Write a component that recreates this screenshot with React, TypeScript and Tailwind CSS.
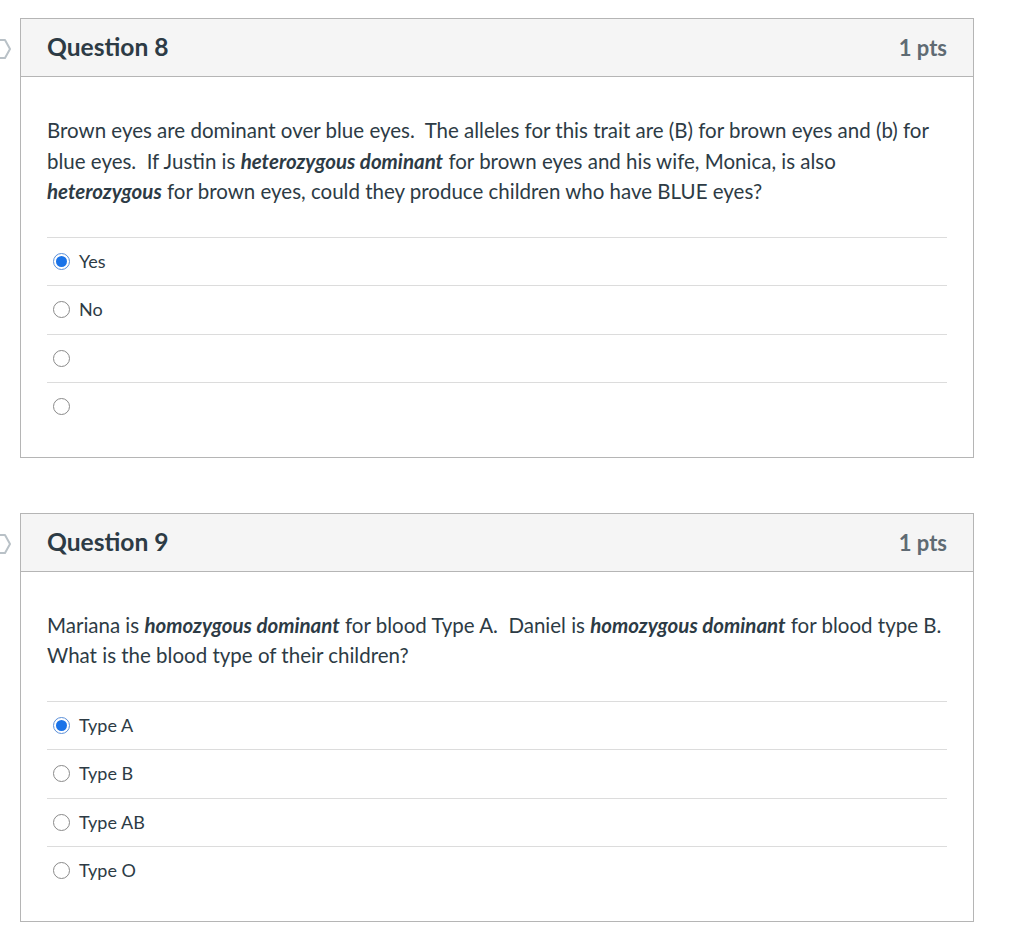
import React from "react";

type Answer = { label: string; checked?: boolean };

const Flag = () => (
  <svg
    className="absolute left-[-30px] top-[18px]"
    width="22"
    height="24"
    viewBox="0 0 22 24"
    fill="none"
  >
    <path
      d="M2 3h12l5 9-5 9H2"
      stroke="#b9c1c7"
      strokeWidth="2"
      strokeLinejoin="round"
    />
  </svg>
);

const Radio = ({ checked }: { checked?: boolean }) =>
  checked ? (
    <span className="flex size-[17px] items-center justify-center rounded-full border border-[#5b8fd8] bg-white">
      <span className="size-[11px] rounded-full bg-[#1a73e8]" />
    </span>
  ) : (
    <span className="size-[17px] rounded-full border border-[#8a8a8a] bg-white" />
  );

const Question = ({
  num,
  children,
  answers,
}: {
  num: number;
  children: React.ReactNode;
  answers: Answer[];
}) => (
  <div className="relative border border-[#b5b5b5] bg-white">
    <Flag />
    <div className="flex h-[58px] items-center justify-between border-b border-[#b5b5b5] bg-[#f5f5f5] px-[26px]">
      <h2 className="text-[24.6px] font-bold text-[#2d3b45]">Question {num}</h2>
      <span className="text-[22px] font-bold text-[#5f6b73]">1 pts</span>
    </div>
    <div className="px-[26px] pb-[26px] pt-[38px]">
      <p className="mb-[30px] text-[20.5px] leading-[30.5px] text-[#2d3b45]">{children}</p>
      <div>
        {answers.map((a, i) => (
          <div
            key={i}
            className="flex h-[48.5px] items-center gap-[9px] border-t border-[#dcdcdc] pl-[6px]"
          >
            <Radio checked={a.checked} />
            <span className="text-[18px] text-[#2d3b45]">{a.label}</span>
          </div>
        ))}
      </div>
    </div>
  </div>
);

export default function App() {
  return (
    <div
      className="min-h-[940px] bg-white pl-[20px] pr-[50px] pt-[18px]"
      style={{ fontFamily: "Lato, 'Liberation Sans', sans-serif" }}
    >
      <div className="flex flex-col gap-[55px]">
        <Question
          num={8}
          answers={[{ label: "Yes", checked: true }, { label: "No" }, { label: "" }, { label: "" }]}
        >
          Brown eyes are dominant over blue eyes.&nbsp; The alleles for this trait are (B) for brown
          eyes and (b) for blue eyes.&nbsp; If Justin is{" "}
          <strong>
            <em>heterozygous dominant</em>
          </strong>{" "}
          for brown eyes and his wife, Monica, is also{" "}
          <strong>
            <em>heterozygous</em>
          </strong>{" "}
          for brown eyes, could they produce children who have BLUE eyes?
        </Question>
        <Question
          num={9}
          answers={[
            { label: "Type A", checked: true },
            { label: "Type B" },
            { label: "Type AB" },
            { label: "Type O" },
          ]}
        >
          Mariana is{" "}
          <strong>
            <em>homozygous dominant</em>
          </strong>{" "}
          for blood Type A.&nbsp; Daniel is{" "}
          <strong>
            <em>homozygous dominant</em>
          </strong>{" "}
          for blood type B. What is the blood type of their children?
        </Question>
      </div>
    </div>
  );
}
